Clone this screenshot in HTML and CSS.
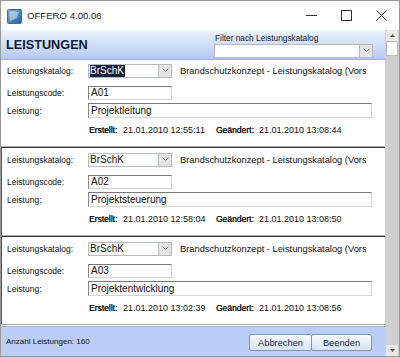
FILE: index.html
```html
<!DOCTYPE html>
<html lang="de">
<head>
  <meta charset="UTF-8" />
  <title>OFFERO 4.00.06</title>
  <link rel="stylesheet" href="styles.css">
</head>
<body>
  <div class="window">
    <div class="titlebar">
      <svg class="app-icon" width="15" height="15" viewBox="0 0 15 15">
        <defs>
          <linearGradient id="ic" x1="0" y1="0" x2="1" y2="1">
            <stop offset="0" stop-color="#7fb0d8"/>
            <stop offset="1" stop-color="#1d5f9a"/>
          </linearGradient>
        </defs>
        <rect x="0.5" y="0.5" width="14" height="14" rx="1" fill="url(#ic)" stroke="#3d6f9c"/>
        <path d="M2 3 Q7 1 12 3 L10 9 Q6 11 3 12 Z" fill="#d8ecf8" opacity="0.55"/>
      </svg>
      <span class="title">OFFERO 4.00.06</span>
      <div class="controls">
        <span class="ctl"><svg width="11" height="11" viewBox="0 0 11 11"><path d="M0 5.5 H11" stroke="#333" stroke-width="1"/></svg></span>
        <span class="ctl"><svg width="11" height="11" viewBox="0 0 11 11"><rect x="0.5" y="0.5" width="10" height="10" fill="none" stroke="#333"/></svg></span>
        <span class="ctl"><svg width="11" height="11" viewBox="0 0 11 11"><path d="M0.5 0.5 L10.5 10.5 M10.5 0.5 L0.5 10.5" stroke="#333" stroke-width="1"/></svg></span>
      </div>
    </div>

    <div class="main">
      <div class="content">
        <div class="header">
          <h1>LEISTUNGEN</h1>
          <div class="filter">
            <div class="filter-label">Filter nach Leistungskatalog</div>
            <div class="combo filter-combo">
              <span class="combo-text"></span>
              <span class="combo-btn"><svg width="7" height="5" viewBox="0 0 7 5"><path d="M0.5 0.5 L3.5 3.5 L6.5 0.5" fill="none" stroke="#8a8a8a"/></svg></span>
            </div>
          </div>
        </div>

        <div class="records">
          <div class="record">
            <div class="row row-katalog">
              <span class="label">Leistungskatalog:</span>
              <div class="combo">
                <span class="combo-text"><span class="selected">BrSchK</span></span>
                <span class="combo-btn"><svg width="7" height="5" viewBox="0 0 7 5"><path d="M0.5 0.5 L3.5 3.5 L6.5 0.5" fill="none" stroke="#8a8a8a"/></svg></span>
              </div>
              <span class="desc">Brandschutzkonzept - Leistungskatalog (Vorschlag AHO)</span>
            </div>
            <div class="row row-code">
              <span class="label">Leistungscode:</span>
              <div class="input short">A01</div>
            </div>
            <div class="row row-name">
              <span class="label">Leistung:</span>
              <div class="input long">Projektleitung</div>
            </div>
            <div class="row row-dates">
              <span class="dlabel first">Erstellt:</span>
              <span class="dvalue">21.01.2010 12:55:11</span>
              <span class="dlabel second">Geändert:</span>
              <span class="dvalue">21.01.2010 13:08:44</span>
            </div>
          </div>

          <div class="record">
            <div class="row row-katalog">
              <span class="label">Leistungskatalog:</span>
              <div class="combo">
                <span class="combo-text">BrSchK</span>
                <span class="combo-btn"><svg width="7" height="5" viewBox="0 0 7 5"><path d="M0.5 0.5 L3.5 3.5 L6.5 0.5" fill="none" stroke="#8a8a8a"/></svg></span>
              </div>
              <span class="desc">Brandschutzkonzept - Leistungskatalog (Vorschlag AHO)</span>
            </div>
            <div class="row row-code">
              <span class="label">Leistungscode:</span>
              <div class="input short">A02</div>
            </div>
            <div class="row row-name">
              <span class="label">Leistung:</span>
              <div class="input long">Projektsteuerung</div>
            </div>
            <div class="row row-dates">
              <span class="dlabel first">Erstellt:</span>
              <span class="dvalue">21.01.2010 12:58:04</span>
              <span class="dlabel second">Geändert:</span>
              <span class="dvalue">21.01.2010 13:08:50</span>
            </div>
          </div>

          <div class="record">
            <div class="row row-katalog">
              <span class="label">Leistungskatalog:</span>
              <div class="combo">
                <span class="combo-text">BrSchK</span>
                <span class="combo-btn"><svg width="7" height="5" viewBox="0 0 7 5"><path d="M0.5 0.5 L3.5 3.5 L6.5 0.5" fill="none" stroke="#8a8a8a"/></svg></span>
              </div>
              <span class="desc">Brandschutzkonzept - Leistungskatalog (Vorschlag AHO)</span>
            </div>
            <div class="row row-code">
              <span class="label">Leistungscode:</span>
              <div class="input short">A03</div>
            </div>
            <div class="row row-name">
              <span class="label">Leistung:</span>
              <div class="input long">Projektentwicklung</div>
            </div>
            <div class="row row-dates">
              <span class="dlabel first">Erstellt:</span>
              <span class="dvalue">21.01.2010 13:02:39</span>
              <span class="dlabel second">Geändert:</span>
              <span class="dvalue">21.01.2010 13:08:56</span>
            </div>
          </div>
        </div>

        <div class="footer">
          <span class="count">Anzahl Leistungen: 160</span>
          <div class="buttons">
            <span class="btn">Abbrechen</span>
            <span class="btn">Beenden</span>
          </div>
        </div>
      </div>

      <div class="scrollbar">
        <span class="sb-arrow up"><svg width="5" height="3" viewBox="0 0 5 3"><path d="M0 3 L2.5 0 L5 3 Z" fill="#555"/></svg></span>
        <span class="sb-thumb"></span>
        <span class="sb-track"></span>
        <span class="sb-arrow down"><svg width="5" height="3" viewBox="0 0 5 3"><path d="M0 0 L2.5 3 L5 0 Z" fill="#555"/></svg></span>
      </div>
    </div>
  </div>
</body>
</html>
```

FILE: styles.css
```css
body {
  margin: 0;
  font-family: "Liberation Sans", Arial, sans-serif;
  background-color: #ffffff;
}
.window {
  width: 400px;
  height: 357px;
  box-sizing: border-box;
  border: 1px solid #999999;
  display: flex;
  flex-direction: column;
  overflow: hidden;
}
.titlebar {
  height: 29px;
  display: flex;
  align-items: center;
  background-color: #ffffff;
}
.app-icon {
  margin-left: 6px;
  margin-top: 1px;
}
.title {
  margin-left: 5px;
  font-size: 9.6px;
  color: #222;
}
.controls {
  margin-left: auto;
  display: flex;
}
.ctl {
  width: 35px;
  height: 29px;
  display: flex;
  align-items: center;
  justify-content: center;
}
.main {
  flex: 1;
  display: flex;
  min-height: 0;
}
.content {
  flex: 1;
  display: flex;
  flex-direction: column;
  min-width: 0;
}
.header {
  height: 30px;
  box-sizing: border-box;
  border-bottom: 1px solid #97b0dc;
  background: linear-gradient(#edf3fd, #b3c9f3);
  display: flex;
  align-items: center;
  justify-content: space-between;
  padding: 0 12px 0 5px;
}
.header h1 {
  margin: 0;
  font-size: 12.7px;
  font-weight: bold;
  color: #0d1a33;
  margin-top: 1px;
}
.filter {
  width: 159px;
  margin-top: 1px;
}
.filter-label {
  font-size: 8.3px;
  color: #1a1a1a;
  height: 10px;
  line-height: 10px;
  margin-bottom: 1px;
  padding-left: 1px;
}
.records {
  flex: 1;
  overflow: hidden;
  background-color: #ffffff;
}
.record {
  height: 87px;
  box-sizing: border-box;
  padding: 3px 0 0 6px;
  border-bottom: 1px solid #a8a8a8;
}
.record + .record {
  border-top: 1px solid #3c3c3c;
  border-left: 1px solid #555;
  padding-left: 5px;
  padding-top: 4px;
  height: 89px;
}
.row {
  display: flex;
  align-items: center;
  height: 15px;
}
.row-code {
  margin-top: 8px;
  height: 14px;
}
.row-name {
  margin-top: 3px;
}
.row-dates {
  margin-top: 5px;
  height: 14px;
  font-size: 9px;
}
.label {
  width: 81px;
  flex: none;
  font-size: 8.5px;
  color: #111;
}
.combo {
  width: 84px;
  height: 14px;
  box-sizing: border-box;
  border: 1px solid #b5b9c0;
  display: flex;
  background-color: #fff;
  flex: none;
}
.filter-combo {
  width: 159px;
}
.combo-text {
  flex: 1;
  font-size: 10px;
  line-height: 12px;
  padding-left: 1px;
  color: #111;
  overflow: hidden;
}
.selected {
  background-color: #16233f;
  color: #ffffff;
  display: inline-block;
  padding-right: 1px;
}
.combo-btn {
  width: 12px;
  background-color: #e4e4e4;
  border-left: 1px solid #b5b9c0;
  display: flex;
  align-items: center;
  justify-content: center;
}
.desc {
  margin-left: 8px;
  width: 186px;
  white-space: nowrap;
  overflow: hidden;
  font-size: 9.3px;
  color: #111;
}
.input {
  height: 14px;
  box-sizing: border-box;
  border: 1px solid;
  border-color: #777 #d4d4d4 #d4d4d4 #888;
  font-size: 10px;
  line-height: 12px;
  padding-left: 2px;
  color: #111;
  flex: none;
}
.input.short {
  width: 84px;
}
.input.long {
  width: 284px;
  height: 15px;
  line-height: 13px;
}
.dlabel {
  font-size: 8.5px;
  color: #111;
  text-shadow: 0.2px 0 0 #111;
}
.dlabel.first {
  margin-left: 82px;
  width: 34px;
}
.dlabel.second {
  width: 43px;
}
.dvalue {
  width: 93px;
  color: #111;
}
.footer {
  height: 30px;
  box-sizing: border-box;
  border-top: 1px solid #9cb2de;
  background-color: #b9cdf6;
  display: flex;
  align-items: center;
  justify-content: space-between;
  padding: 0 13px 0 5px;
}
.count {
  font-size: 8px;
  color: #111;
}
.buttons {
  display: flex;
  margin-top: 2px;
}
.btn {
  height: 17px;
  box-sizing: border-box;
  border: 1px solid #8295b9;
  border-radius: 2px;
  background: linear-gradient(#f8fafe, #d9e4f6);
  font-size: 9.3px;
  color: #17264a;
  display: flex;
  align-items: center;
  justify-content: center;
}
.btn:first-child {
  width: 63px;
}
.btn:last-child {
  width: 61px;
  margin-left: -1px;
}
.scrollbar {
  width: 14px;
  background-color: #cfcfcf;
  display: flex;
  flex-direction: column;
}
.sb-arrow {
  height: 11px;
  display: flex;
  align-items: center;
  justify-content: center;
  background-color: #e8e8e8;
  margin: 0 1px;
}
.sb-thumb {
  height: 13px;
  background-color: #ffffff;
  border: 1px solid #bdbdbd;
  margin: 0 1px;
}
.sb-track {
  flex: 1;
}
```
